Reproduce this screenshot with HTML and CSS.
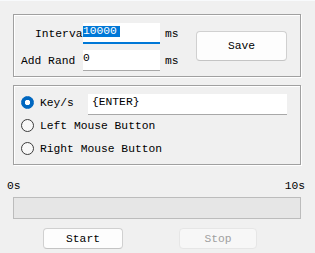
FILE: index.html
```html
<!DOCTYPE html>
<html lang="en">
<head>
    <meta charset="UTF-8">
    <meta name="viewport" content="width=device-width, initial-scale=1.0">
    <title>Auto Clicker</title>
    <link rel="stylesheet" href="styles.css">
</head>
<body>
    <div class="window">

        <!-- Timing settings -->
        <div class="group settings">
            <div class="fields">
                <label class="lbl lbl-clip">Interva</label>
                <div class="edit focused"><span class="sel">10000</span></div>
                <span class="unit">ms</span>
                <label class="lbl">Add Rand</label>
                <div class="edit">0</div>
                <span class="unit">ms</span>
            </div>
            <button class="btn save">Save</button>
        </div>

        <!-- What to send -->
        <div class="group mode">
            <div class="opt">
                <span class="radio checked"></span>
                <span class="opt-text key">Key/s</span>
                <div class="edit key-edit">{ENTER}</div>
            </div>
            <div class="opt">
                <span class="radio"></span>
                <span class="opt-text">Left Mouse Button</span>
            </div>
            <div class="opt">
                <span class="radio"></span>
                <span class="opt-text">Right Mouse Button</span>
            </div>
        </div>

        <!-- Progress -->
        <div class="scale">
            <span>0s</span>
            <span>10s</span>
        </div>
        <div class="progress"></div>

        <div class="actions">
            <button class="btn start">Start</button>
            <button class="btn stop" disabled>Stop</button>
        </div>
    </div>
</body>
</html>
```

FILE: styles.css
```css
/* --- General --- */
body {
    margin: 0;
    width: 315px;
    height: 253px;
    overflow: hidden;
    background-color: #f0f0f0;
    box-shadow: inset 0 1px 0 #f8fafc;
    font-family: "Liberation Mono", "DejaVu Sans Mono", monospace;
    font-size: 11.3px;
    color: #000;
}

.window {
    padding-top: 14px;
}

.group {
    box-sizing: border-box;
    width: 288px;
    margin-left: 13px;
    border: 1px solid #a0a0a0;
    box-shadow: inset 1px 1px 0 #fff, 1px 1px 0 #fff;
}

/* --- Edit boxes --- */
.edit {
    box-sizing: border-box;
    height: 21px;
    background: #fff;
    border-bottom: 1px solid #a8a8a8;
    line-height: 17px;
    white-space: nowrap;
}

.edit.focused {
    border-bottom: 2px solid #0078d7;
    padding-top: 3px;
    line-height: 11px;
}

.sel {
    display: inline-block;
    background: #0078d7;
    color: #fff;
    padding-right: 3px;
}

/* --- Buttons --- */
.btn {
    box-sizing: border-box;
    padding: 0;
    font: inherit;
    color: #000;
    background: #fdfdfd;
    border: 1px solid #d0d0d0;
    border-bottom-color: #c4c4c4;
    border-radius: 4px;
}

.btn:disabled {
    color: #a0a0a0;
    background: #f7f7f7;
    border-color: #e6e6e6;
}

/* --- Timing group --- */
.settings {
    display: flex;
    align-items: flex-start;
    height: 63px;
    padding: 8px 13px 0 7px;
}

.fields {
    display: grid;
    grid-template-columns: 62px 77px auto;
    row-gap: 6px;
    align-items: center;
}

.lbl {
    white-space: nowrap;
}

.lbl-clip {
    padding-left: 14px;
}

.unit {
    margin-left: 5px;
}

.save {
    width: 91px;
    height: 30px;
    margin-top: 8px;
    margin-left: auto;
}

/* --- Mode group --- */
.mode {
    display: flex;
    flex-direction: column;
    height: 80px;
    margin-top: 8px;
    padding: 5px 13px 4px 7px;
}

.opt {
    display: flex;
    align-items: center;
    height: 23px;
}

.radio {
    flex: none;
    box-sizing: border-box;
    width: 13px;
    height: 13px;
    margin-right: 6px;
    border: 1px solid #3c3c3c;
    border-radius: 50%;
    background: #f8f8f8;
}

.radio.checked {
    border-color: #0067c0;
    background: radial-gradient(circle, #fff 0 2.4px, #0067c0 3px);
}

.opt-text {
    white-space: nowrap;
}

.key {
    width: 48px;
}

.key-edit {
    width: 199px;
    align-self: flex-start;
    margin-top: 3px;
    padding-left: 4px;
}

/* --- Progress --- */
.scale {
    display: flex;
    justify-content: space-between;
    margin: 15px 10px 0 7px;
    line-height: 13px;
}

.progress {
    box-sizing: border-box;
    width: 288px;
    height: 22px;
    margin: 4px 0 0 13px;
    border: 1px solid #bcbcbc;
    background: #e6e6e6;
}

.actions {
    display: flex;
    margin-top: 9px;
    padding-left: 43px;
}

.start {
    width: 80px;
    height: 21px;
}

.stop {
    width: 78px;
    height: 21px;
    margin-left: 56px;
}
```
